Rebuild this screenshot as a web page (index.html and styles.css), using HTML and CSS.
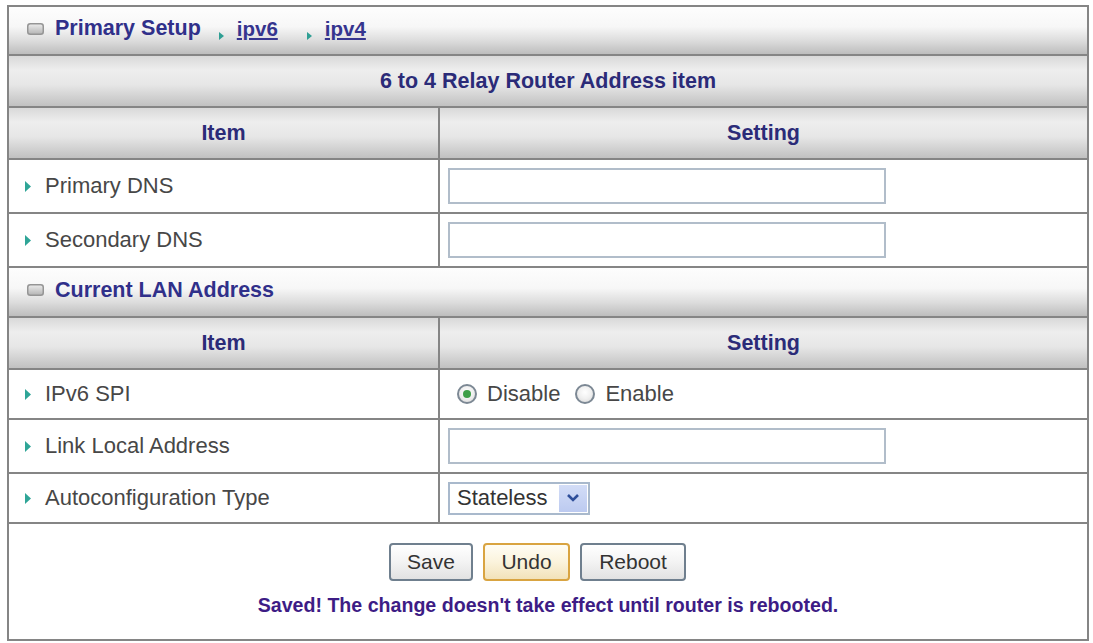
FILE: index.html
```html
<!DOCTYPE html>
<html>
<head>
<meta charset="utf-8">
<title>Primary Setup</title>
<link rel="stylesheet" href="styles.css">
</head>
<body>
<div class="panel">
  <div class="cell span hd1 title">
    <svg class="box" width="17" height="12" viewBox="0 0 17 12"><defs><linearGradient id="bx" x1="0" y1="0" x2="0" y2="1"><stop offset="0" stop-color="#ececec"/><stop offset="1" stop-color="#b4b4b4"/></linearGradient></defs><rect x="0.75" y="0.75" width="15.5" height="10.5" rx="2.5" fill="url(#bx)" stroke="#959595" stroke-width="1.5"/></svg>
    <span class="ttl">Primary Setup</span>
    <span class="crumb"><svg class="tri-s" width="5" height="8" viewBox="0 0 5 8"><polygon points="0,0 5,4 0,8" fill="#2f9f94"/></svg><a href="#">ipv6</a></span>
    <span class="crumb c2"><svg class="tri-s" width="5" height="8" viewBox="0 0 5 8"><polygon points="0,0 5,4 0,8" fill="#2f9f94"/></svg><a href="#">ipv4</a></span>
  </div>
  <div class="cell span hd2 center">6 to 4 Relay Router Address item</div>
  <div class="cell hd2 center">Item</div>
  <div class="cell hd2 center">Setting</div>

  <div class="cell label"><svg class="tri" width="6" height="11" viewBox="0 0 6 11"><polygon points="0,0 6,5.5 0,11" fill="#2fa597"/></svg>Primary DNS</div>
  <div class="cell field"><input class="txt" type="text"></div>
  <div class="cell label"><svg class="tri" width="6" height="11" viewBox="0 0 6 11"><polygon points="0,0 6,5.5 0,11" fill="#2fa597"/></svg>Secondary DNS</div>
  <div class="cell field"><input class="txt" type="text"></div>

  <div class="cell span hd1 title">
    <svg class="box" width="17" height="12" viewBox="0 0 17 12"><rect x="0.75" y="0.75" width="15.5" height="10.5" rx="2.5" fill="url(#bx)" stroke="#959595" stroke-width="1.5"/></svg>
    <span class="ttl">Current LAN Address</span>
  </div>
  <div class="cell hd2 center">Item</div>
  <div class="cell hd2 center">Setting</div>

  <div class="cell label"><svg class="tri" width="6" height="11" viewBox="0 0 6 11"><polygon points="0,0 6,5.5 0,11" fill="#2fa597"/></svg>IPv6 SPI</div>
  <div class="cell field">
    <span class="radio first"><span class="dot on"></span>Disable</span>
    <span class="radio"><span class="dot"></span>Enable</span>
  </div>
  <div class="cell label"><svg class="tri" width="6" height="11" viewBox="0 0 6 11"><polygon points="0,0 6,5.5 0,11" fill="#2fa597"/></svg>Link Local Address</div>
  <div class="cell field"><input class="txt" type="text"></div>
  <div class="cell label"><svg class="tri" width="6" height="11" viewBox="0 0 6 11"><polygon points="0,0 6,5.5 0,11" fill="#2fa597"/></svg>Autoconfiguration Type</div>
  <div class="cell field">
    <div class="select"><span class="sel-text">Stateless</span><span class="sel-btn"><svg width="14" height="10" viewBox="0 0 14 10"><polyline points="2,2 7,7 12,2" fill="none" stroke="#2f4f9a" stroke-width="2.6"/></svg></span></div>
  </div>

  <div class="cell span actions">
    <div class="btns">
      <button class="btn save">Save</button>
      <button class="btn undo">Undo</button>
      <button class="btn reboot">Reboot</button>
    </div>
    <div class="msg">Saved! The change doesn't take effect until router is rebooted.</div>
  </div>
</div>
</body>
</html>
```

FILE: styles.css
```css
html, body {
  margin: 0;
  background: #ffffff;
}
body {
  padding: 5px 0 0 7px;
  font-family: "Liberation Sans", Arial, sans-serif;
}
.panel {
  width: 1082px;
  box-sizing: border-box;
  display: grid;
  grid-template-columns: 429px 647px;
  grid-template-rows: 47px 50px 50px 52px 52px 48px 50px 48px 52px 48px 115px;
  gap: 2px;
  padding: 2px;
  background: #858585;
}
.cell {
  background: #ffffff;
  display: flex;
  align-items: center;
  min-width: 0;
}
.span { grid-column: 1 / 3; }
.hd1 {
  background: linear-gradient(to bottom, #fdfdfd 0%, #f7f7f7 42%, #dcdcdc 72%, #bdbdbd 100%);
}
.hd2 {
  background: linear-gradient(to bottom, #d9d9d9 0%, #eeeeee 28%, #e6e6e6 58%, #c1c1c1 100%);
}
.center {
  justify-content: center;
  font-weight: bold;
  font-size: 21.5px;
  color: #2b2b78;
}
.title {
  padding-left: 18px;
  padding-bottom: 4px;
  box-sizing: border-box;
  font-weight: bold;
  font-size: 21.5px;
  color: #30308a;
}
.box { flex: none; margin-right: 11px; }
.crumb {
  display: inline-flex;
  align-items: center;
  margin-left: 18px;
}
.crumb.c2 { margin-left: 29px; }
.tri-s { margin-right: 13px; position: relative; top: 7px; }
.crumb a {
  color: #35358f;
  text-decoration: underline;
  font-size: 20.5px;
}
.label {
  padding-left: 16px;
  font-size: 22px;
  color: #474747;
}
.tri { flex: none; margin-right: 14px; }
.field { padding-left: 8px; }
.txt {
  box-sizing: border-box;
  width: 438px;
  height: 36px;
  border: 2px solid #b1bdca;
  background: #ffffff;
  margin: 0;
  padding: 0 4px;
  outline: none;
}
.radio {
  display: inline-flex;
  align-items: center;
  font-size: 22px;
  color: #474747;
  margin-left: 15px;
}
.radio.first { margin-left: 9px; }
.dot {
  box-sizing: border-box;
  width: 20px;
  height: 20px;
  border-radius: 50%;
  border: 2px solid #7c8894;
  background: radial-gradient(circle at 50% 40%, #ffffff 0%, #f0f0f0 50%, #d6d6d6 100%);
  margin-right: 10px;
  position: relative;
}
.dot.on::after {
  content: "";
  position: absolute;
  left: 4px;
  top: 4px;
  width: 8px;
  height: 8px;
  border-radius: 50%;
  background: #3e9f48;
}
.select {
  box-sizing: border-box;
  width: 142px;
  height: 33px;
  border: 2px solid #a9b9cc;
  display: flex;
  align-items: center;
  justify-content: space-between;
  padding: 0 1px 0 7px;
  background: #ffffff;
}
.sel-text { font-size: 22px; color: #333333; }
.sel-btn {
  width: 28px;
  height: 27px;
  background: linear-gradient(to bottom, #d3ddf7, #bccaf0);
  display: flex;
  align-items: center;
  justify-content: center;
}
.actions {
  flex-direction: column;
  align-items: center;
  justify-content: flex-start;
  padding-top: 19px;
  box-sizing: border-box;
}
.btns {
  display: flex;
  gap: 10px;
  padding-right: 21px;
}
.btn {
  box-sizing: border-box;
  height: 38px;
  border: 2px solid #6f7f8e;
  border-radius: 4px;
  background: linear-gradient(to bottom, #ffffff 0%, #f3f3f3 50%, #e2e2e2 100%);
  font-family: "Liberation Sans", Arial, sans-serif;
  font-size: 21px;
  color: #333333;
  padding: 0;
}
.save { width: 84px; }
.undo {
  width: 87px;
  border-color: #d9a441;
  background: linear-gradient(to bottom, #fffdf5 0%, #fbf3dc 50%, #f2e2b9 100%);
}
.reboot { width: 106px; }
.msg {
  margin-top: 12px;
  font-weight: bold;
  font-size: 19.6px;
  color: #3d1c85;
  line-height: 24px;
}
```
